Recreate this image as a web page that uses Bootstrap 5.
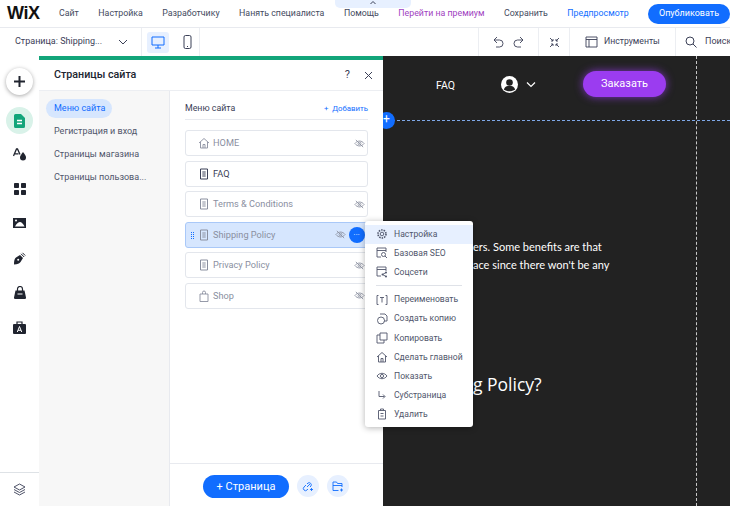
<!DOCTYPE html>
<html lang="ru">
<head>
    <meta charset="UTF-8">
    <meta name="viewport" content="width=device-width, initial-scale=1.0">
    <title>Wix Editor - Pages</title>
    <link href="https://cdn.jsdelivr.net/npm/bootstrap@5.3.0/dist/css/bootstrap.min.css" rel="stylesheet">
    <style>
        html, body {
            height: 100%;
            overflow: hidden;
        }
        body {
            font-family: Roboto, "Liberation Sans", sans-serif;
            font-size: 9px;
            color: #3b4057;
            background-color: #fff;
            position: relative;
        }
        svg {
            display: block;
            flex: none;
        }
        .top-bar {
            height: 28px;
            border-bottom: 1px solid #e8eaef;
            position: relative;
        }
        .logo {
            font-family: "Liberation Sans", sans-serif;
            font-weight: 700;
            font-size: 18px;
            letter-spacing: -.4px;
            color: #111;
            width: 59px;
            padding-left: 7px;
        }
        .top-link {
            font-size: 8.8px;
            white-space: nowrap;
            color: #444a5e;
        }
        .top-links {
            width: 589px;
            gap: 19.5px;
        }
        .top-link.premium { color: #a13fbf; }
        .top-link.preview { color: #116dff; }
        .publish-btn {
            width: 82px;
            height: 20px;
            padding: 0;
            font-size: 9px;
            border-radius: 10px;
            background-color: #116dff;
            border: 0;
            color: #fff;
        }
        .help-tab {
            position: absolute;
            left: 335px;
            top: 0;
            width: 76px;
            height: 8px;
            background-color: #e7f0ff;
            border-radius: 0 0 5px 5px;
        }
        .tool-bar {
            height: 28px;
        }
        .tool-cell {
            height: 28px;
            flex-shrink: 0;
            border-right: 1px solid #eceef2;
        }
        .page-select { width: 142px; padding: 0 13px 0 15px; }
        .device-cell { width: 58px; padding-left: 5px; gap: 7px; }
        .device-btn {
            width: 22px;
            height: 21px;
            border-radius: 3px;
        }
        .device-btn.active { background-color: #e7f0ff; }
        .spacer-cell { width: 279px; }
        .undo-cell { width: 60px; padding-left: 14px; gap: 9px; }
        .fit-cell { width: 31px; justify-content: center; }
        .tools-cell { width: 106px; padding-left: 15px; gap: 6px; font-size: 8.7px; }
        .search-cell { padding-left: 9px; gap: 8px; border: 0; white-space: nowrap; }
        .work-area {
            height: 450px;
        }
        .rail {
            width: 39px;
            padding-top: 12px;
        }
        .add-circle, .pages-circle {
            width: 27px;
            height: 27px;
            border-radius: 50%;
        }
        .add-circle {
            background-color: #fff;
            box-shadow: 0 1px 4px rgba(0, 0, 0, .35);
            margin-bottom: 12px;
        }
        .pages-circle {
            background-color: #d9f2e9;
            margin-bottom: 3px;
        }
        .rail-item {
            height: 34.6px;
        }
        .layers-item {
            margin-top: auto;
            height: 34px;
            width: 100%;
        }
        .panel {
            width: 344px;
            border-top: 4px solid #12a57a;
            background-color: #fff;
        }
        .panel-head {
            height: 31px;
            padding: 1px 10px 0 15px;
            border-bottom: 1px solid #eceef2;
        }
        .panel-title {
            font-size: 10.7px;
            font-weight: 500;
            color: #20242f;
        }
        .panel-help {
            font-size: 11px;
            margin-right: 14px;
            color: #3b4057;
        }
        .side-menu {
            width: 131px;
            background-color: #f7f7f7;
            border-right: 1px solid #e8eaef;
            padding: 8px 0 0 7px;
        }
        .side-item {
            height: 19px;
            line-height: 19px;
            padding: 0 8px;
            margin-bottom: 4px;
            color: #50566b;
            white-space: nowrap;
        }
        .side-item.active {
            width: 66px;
            background-color: #d6e6fe;
            color: #116dff;
            border-radius: 10px;
        }
        .page-pane {
            padding: 9px 15px 0 15px;
        }
        .pane-head {
            height: 20px;
            font-size: 8.8px;
            border-bottom: 1px solid #e8eaef;
            margin-bottom: 10px;
            color: #3b4057;
            padding-bottom: 2px;
        }
        .add-link {
            font-size: 7.8px;
            color: #116dff;
        }
        .page-row {
            height: 26px;
            margin-bottom: 4.6px;
            border: 1px solid #e3e6ec;
            border-radius: 3px;
            padding: 0 2px 0 12px;
            gap: 3px;
            color: #8a8f9f;
            font-size: 9.2px;
            position: relative;
        }
        .page-row.live { color: #3b4057; }
        .page-row.selected {
            background-color: #d6e6fe;
            border-color: #a9c8f8;
        }
        .row-eye { margin-left: auto; }
        .page-row.selected .row-eye { margin-right: 19px; }
        .drag-dots {
            position: absolute;
            left: 5px;
            top: 9px;
            width: 3px;
            height: 7px;
            border-left: 1px dotted #116dff;
            border-right: 1px dotted #116dff;
        }
        .more-btn {
            position: absolute;
            left: 163px;
            top: 4px;
            width: 16px;
            height: 16px;
            border-radius: 50%;
            background-color: #116dff;
            color: #fff;
            font-size: 4px;
            line-height: 16px;
            text-align: center;
            letter-spacing: .8px;
        }
        .panel-foot {
            height: 43px;
            border-top: 1px solid #e8eaef;
            padding: 11px 0 0 33px;
            gap: 8px;
        }
        .add-page-btn {
            width: 86px;
            height: 23px;
            padding: 0;
            border: 0;
            border-radius: 12px;
            font-size: 11px;
            line-height: 23px;
            background-color: #116dff;
            color: #fff;
        }
        .foot-circle {
            width: 22px;
            height: 22px;
            border-radius: 50%;
            background-color: #e7f0ff;
        }
        .site-canvas {
            background-color: #222;
            position: relative;
            overflow: hidden;
            color: #fff;
        }
        .site-canvas > * { position: absolute; }
        .faq-link { left: 53px; top: 22px; font-size: 10.5px; }
        .avatar-icon { left: 118px; top: 20px; }
        .avatar-caret { left: 143px; top: 25px; }
        .order-btn {
            left: 200px;
            top: 15px;
            width: 83px;
            height: 26px;
            border-radius: 13px;
            background-color: #9b3cf0;
            box-shadow: 0 0 9px rgba(155, 60, 240, .75);
            font-size: 11px;
            line-height: 25px;
            text-align: center;
        }
        .guide-h {
            left: 4px;
            right: 0;
            top: 64px;
            border-top: 1px dashed #7fa8e8;
        }
        .guide-v {
            left: 313px;
            top: 0;
            bottom: 0;
            border-left: 1px dashed #c8c8c8;
        }
        .guide-plus {
            left: -5px;
            top: 56px;
            width: 17px;
            height: 17px;
            line-height: 15px;
            border-radius: 50%;
            background-color: #116dff;
            text-align: center;
            font-size: 12px;
        }
        .site-text {
            left: 90px;
            top: 182px;
            font-family: Lato, "Liberation Sans", sans-serif;
            font-size: 11px;
            line-height: 18px;
            white-space: nowrap;
        }
        .site-heading {
            left: 90px;
            top: 315px;
            font-family: "Open Sans", sans-serif;
            font-size: 17.5px;
            line-height: 26px;
            white-space: nowrap;
        }
        .ctx-menu {
            position: absolute;
            left: 365px;
            top: 221px;
            width: 108px;
            height: 206px;
            padding-top: 3.5px;
            background-color: #fff;
            border-radius: 3px;
            box-shadow: 0 1px 6px rgba(0, 0, 0, .3);
            font-size: 8.6px;
        }
        .ctx-item {
            height: 19.1px;
            padding-left: 11px;
            gap: 6px;
            color: #50566b;
            white-space: nowrap;
        }
        .ctx-item.active { background-color: #e7f0ff; }
        .ctx-sep {
            height: 1px;
            margin: 3.5px 11px 4px 11px;
            background-color: #dfe2e8;
        }
    </style>
</head>
<body>

<svg width="0" height="0" class="position-absolute">
    <defs>
        <symbol id="i-page" viewBox="0 0 12 12"><path d="M2.500 1h7v10h-7zM4.300 4h3.400M4.300 6h3.400M4.300 8h3.400" fill="none" stroke="currentColor" stroke-width="1"/></symbol>
        <symbol id="i-eye-off" viewBox="0 0 12 12"><path d="M1 6c2.600-3.600 7.400-3.600 10 0-2.600 3.600-7.400 3.600-10 0z" fill="none" stroke="#8a8f9f" stroke-width=".9"/><circle cx="6" cy="6" r="1.600" fill="none" stroke="#8a8f9f" stroke-width=".9"/><path d="M2 2l8 8" stroke="#8a8f9f" stroke-width=".9"/></symbol>
        <symbol id="i-home" viewBox="0 0 12 12"><path d="M1 6l5-4.500L11 6M2.500 5v6h7V5M5 11V7.500h2V11" fill="none" stroke="currentColor" stroke-width=".9"/></symbol>
    </defs>
</svg>

<!-- Top menu -->
<header class="top-bar d-flex align-items-center">
    <div class="logo">WiX</div>
    <nav class="top-links d-flex align-items-center">
        <span class="top-link">Сайт</span>
        <span class="top-link">Настройка</span>
        <span class="top-link">Разработчику</span>
        <span class="top-link">Нанять специалиста</span>
        <span class="top-link">Помощь</span>
        <span class="top-link premium">Перейти на премиум</span>
        <span class="top-link">Сохранить</span>
        <span class="top-link preview">Предпросмотр</span>
    </nav>
    <button class="btn publish-btn" type="button">Опубликовать</button>
    <div class="help-tab d-flex justify-content-center">
        <svg width="8" height="5" viewBox="0 0 8 5"><path d="M1.500 4L4 1.500 6.500 4" fill="none" stroke="#3b4057"/></svg>
    </div>
</header>

<!-- Tools -->
<div class="tool-bar d-flex">
    <div class="tool-cell page-select d-flex align-items-center justify-content-between">
        <span>Страница: Shipping...</span>
        <svg width="10" height="6" viewBox="0 0 10 6"><path d="M1 1l4 4 4-4" fill="none" stroke="#3b4057"/></svg>
    </div>
    <div class="tool-cell device-cell d-flex align-items-center">
        <div class="device-btn active d-flex align-items-center justify-content-center">
            <svg width="14" height="13" viewBox="0 0 14 13"><path d="M1 1h12v8H1zM7 9v3M4 12h6" fill="none" stroke="#116dff"/></svg>
        </div>
        <div class="device-btn d-flex align-items-center justify-content-center">
            <svg width="9" height="14" viewBox="0 0 9 14"><rect x="1" y=".5" width="7" height="13" rx="1.500" fill="none" stroke="#3b4057"/><path d="M4 11.500h1" stroke="#3b4057"/></svg>
        </div>
    </div>
    <div class="tool-cell spacer-cell"></div>
    <div class="tool-cell undo-cell d-flex align-items-center">
        <svg width="11" height="12" viewBox="0 0 11 12"><path d="M4 1L1 4l3 3M1 4h5.500a3.500 3.500 0 010 7H3" fill="none" stroke="#3b4057" stroke-width=".9"/></svg>
        <svg width="11" height="12" viewBox="0 0 11 12"><path d="M7 1l3 3-3 3M10 4H4.500a3.500 3.500 0 000 7H8" fill="none" stroke="#3b4057" stroke-width=".9"/></svg>
    </div>
    <div class="tool-cell fit-cell d-flex align-items-center">
        <svg width="11" height="11" viewBox="0 0 11 11"><path d="M1 1l3 3M4 2v2H2M10 1L7 4M7 2v2h2M1 10l3-3M4 9V7H2M10 10L7 7M7 9V7h2" fill="none" stroke="#3b4057" stroke-width=".9"/></svg>
    </div>
    <div class="tool-cell tools-cell d-flex align-items-center">
        <svg width="13" height="12" viewBox="0 0 13 12"><path d="M1 1h11v10H1zM1 3.500h11M4 3.500V11" fill="none" stroke="#3b4057" stroke-width=".9"/></svg>
        <span>Инструменты</span>
    </div>
    <div class="tool-cell search-cell d-flex align-items-center">
        <svg width="12" height="12" viewBox="0 0 12 12"><circle cx="5" cy="5" r="4" fill="none" stroke="#3b4057"/><path d="M8 8l3.500 3.500" stroke="#3b4057"/></svg>
        <span>Поиск</span>
    </div>
</div>

<div class="work-area d-flex">
    <!-- Left rail -->
    <aside class="rail d-flex flex-column align-items-center">
        <div class="add-circle d-flex align-items-center justify-content-center">
            <svg width="13" height="13" viewBox="0 0 13 13"><path d="M6.500 1v11M1 6.500h11" stroke="#20242f" stroke-width="2"/></svg>
        </div>
        <div class="pages-circle d-flex align-items-center justify-content-center">
            <svg width="11" height="14" viewBox="0 0 11 14"><path d="M1.500 0H7l4 4v8.500a1.500 1.500 0 01-1.500 1.500h-8A1.500 1.500 0 010 12.500v-11A1.500 1.500 0 011.500 0z" fill="#12a57a"/><path d="M3 6.500h5M3 9.500h5" stroke="#fff" stroke-width="1.500"/></svg>
        </div>
        <div class="rail-item d-flex align-items-center">
            <svg width="14" height="13" viewBox="0 0 14 13"><path d="M.5 8L3.500 1h1L7 6.500M2 5.800h3.500" fill="none" stroke="#20242f" stroke-width="1.300"/><path d="M10 4c2 2.600 3 4 3 5.500a3 3 0 01-6 0C7 8 8 6.600 10 4z" fill="#20242f"/></svg>
        </div>
        <div class="rail-item d-flex align-items-center">
            <svg width="12" height="12" viewBox="0 0 12 12" fill="#20242f"><rect width="5" height="5" rx=".8"/><rect x="7" width="5" height="5" rx=".8"/><rect y="7" width="5" height="5" rx=".8"/><rect x="7" y="7" width="5" height="5" rx=".8"/></svg>
        </div>
        <div class="rail-item d-flex align-items-center">
            <svg width="13" height="10" viewBox="0 0 13 10"><rect width="13" height="10" fill="#20242f"/><path d="M2 8.500C4 5 5.500 4 7 4s3 1.500 4.500 4.500z" fill="#fff"/><circle cx="3" cy="2.500" r="1" fill="#fff"/></svg>
        </div>
        <div class="rail-item d-flex align-items-center">
            <svg width="13" height="13" viewBox="0 0 13 13"><path d="M1 12.500c0-4 .5-6 2-7L7 3l3 3-2.500 4c-1 1.500-3 2.200-6.500 2.500z" fill="#20242f"/><path d="M8 1.800l3.200 3.200M9.500.8l2.700 2.700" stroke="#20242f"/><circle cx="5.200" cy="7.800" r="1" fill="#fff"/></svg>
        </div>
        <div class="rail-item d-flex align-items-center">
            <svg width="12" height="13" viewBox="0 0 12 13"><path d="M1.500 4.500h9L12 11.500a1.300 1.300 0 01-1.300 1.500H1.300A1.300 1.300 0 010 11.500z" fill="#20242f"/><path d="M3.500 5V3a2.500 2.500 0 015 0v2" fill="none" stroke="#20242f" stroke-width="1.200"/><path d="M3.500 8h5" stroke="#fff"/></svg>
        </div>
        <div class="rail-item d-flex align-items-center">
            <svg width="13" height="13" viewBox="0 0 13 13"><rect y="3" width="13" height="10" rx="1" fill="#20242f"/><path d="M4 3V1h5v2" fill="none" stroke="#20242f" stroke-width="1.200"/><path d="M4.300 11l2.200-5.500L8.700 11M5.100 9.300h2.800" fill="none" stroke="#fff"/></svg>
        </div>
        <div class="layers-item border-top d-flex align-items-center justify-content-center">
            <svg width="13" height="13" viewBox="0 0 13 13"><path d="M6.500 1L12 4 6.500 7 1 4zM1 6.500l5.500 3 5.500-3M1 9l5.500 3L12 9" fill="none" stroke="#3b4057" stroke-width=".9"/></svg>
        </div>
    </aside>

    <!-- Pages panel -->
    <section class="panel d-flex flex-column">
        <div class="panel-head d-flex align-items-center">
            <span class="panel-title me-auto">Страницы сайта</span>
            <span class="panel-help">?</span>
            <svg width="9" height="9" viewBox="0 0 9 9"><path d="M1 1l7 7M8 1L1 8" stroke="#3b4057"/></svg>
        </div>
        <div class="d-flex flex-grow-1">
            <div class="side-menu">
                <div class="side-item active">Меню сайта</div>
                <div class="side-item">Регистрация и вход</div>
                <div class="side-item">Страницы магазина</div>
                <div class="side-item">Страницы пользова...</div>
            </div>
            <div class="d-flex flex-column flex-grow-1">
                <div class="page-pane flex-grow-1">
                    <div class="pane-head d-flex align-items-center justify-content-between">
                        <span>Меню сайта</span>
                        <span class="add-link">+&nbsp; Добавить</span>
                    </div>
                    <div class="page-row d-flex align-items-center">
                        <svg width="12" height="12"><use href="#i-home"/></svg>
                        <span>HOME</span>
                        <svg class="row-eye" width="11" height="11"><use href="#i-eye-off"/></svg>
                    </div>
                    <div class="page-row live d-flex align-items-center">
                        <svg width="12" height="12"><use href="#i-page"/></svg>
                        <span>FAQ</span>
                    </div>
                    <div class="page-row d-flex align-items-center">
                        <svg width="12" height="12"><use href="#i-page"/></svg>
                        <span>Terms &amp; Conditions</span>
                        <svg class="row-eye" width="11" height="11"><use href="#i-eye-off"/></svg>
                    </div>
                    <div class="page-row selected d-flex align-items-center">
                        <span class="drag-dots"></span>
                        <svg width="12" height="12"><use href="#i-page"/></svg>
                        <span>Shipping Policy</span>
                        <svg class="row-eye" width="11" height="11"><use href="#i-eye-off"/></svg>
                        <span class="more-btn">•••</span>
                    </div>
                    <div class="page-row d-flex align-items-center">
                        <svg width="12" height="12"><use href="#i-page"/></svg>
                        <span>Privacy Policy</span>
                        <svg class="row-eye" width="11" height="11"><use href="#i-eye-off"/></svg>
                    </div>
                    <div class="page-row d-flex align-items-center">
                        <svg width="12" height="12" viewBox="0 0 12 12"><path d="M2 4h8v7.500H2zM4.500 4V2.500a1.500 1.500 0 013 0V4" fill="none" stroke="currentColor" stroke-width=".9"/></svg>
                        <span>Shop</span>
                        <svg class="row-eye" width="11" height="11"><use href="#i-eye-off"/></svg>
                    </div>
                </div>
                <div class="panel-foot d-flex">
                    <button class="btn add-page-btn" type="button">+ Страница</button>
                    <div class="foot-circle d-flex align-items-center justify-content-center">
                        <svg width="12" height="12" viewBox="0 0 12 12"><path d="M5 7l3-3M4 5L2 7a2 2 0 003 3l1-1M8 7l1-1a2.200 2.200 0 00-3-3L5 4M9.500 8v3M8 9.500h3" fill="none" stroke="#116dff" stroke-width=".9"/></svg>
                    </div>
                    <div class="foot-circle d-flex align-items-center justify-content-center">
                        <svg width="12" height="11" viewBox="0 0 12 11"><path d="M6.500 9.500H1V1h3.500l1 1.500H10V6M1 4.500h9M9.500 7.500v3M8 9h3" fill="none" stroke="#116dff" stroke-width=".9"/></svg>
                    </div>
                </div>
            </div>
        </div>
    </section>

    <!-- Site preview -->
    <main class="site-canvas flex-grow-1">
        <span class="faq-link">FAQ</span>
        <svg class="avatar-icon" width="17" height="17" viewBox="0 0 17 17"><circle cx="8.500" cy="8.500" r="8.500" fill="#fff"/><circle cx="8.500" cy="6.500" r="3.300" fill="#222"/><path d="M2.800 13.500c1-3 3-3.800 5.700-3.800s4.700.8 5.700 3.800c-3 2.400-8.400 2.400-11.400 0z" fill="#222"/></svg>
        <svg class="avatar-caret" width="10" height="7" viewBox="0 0 10 7"><path d="M1 1.500l4 4 4-4" fill="none" stroke="#fff" stroke-width="1.200"/></svg>
        <span class="order-btn">Заказать</span>
        <div class="guide-h"></div>
        <div class="guide-v"></div>
        <span class="guide-plus">+</span>
        <p class="site-text m-0">ers. Some benefits are that<br>ace since there won't be any</p>
        <p class="site-heading m-0">g Policy?</p>
    </main>
</div>

<!-- Page context menu -->
<div class="ctx-menu">
    <div class="ctx-item active d-flex align-items-center">
        <svg width="12" height="12" viewBox="0 0 12 12"><circle cx="6" cy="6" r="1.800" fill="none" stroke="#50566b" stroke-width=".9"/><circle cx="6" cy="6" r="4" fill="none" stroke="#50566b" stroke-width="1.600" stroke-dasharray="1.500 1"/></svg>
        <span>Настройка</span>
    </div>
    <div class="ctx-item d-flex align-items-center">
        <svg width="12" height="12" viewBox="0 0 12 12"><path d="M5 10H1V1h9v4M1 3.500h9" fill="none" stroke="#50566b" stroke-width=".9"/><circle cx="7.500" cy="7.500" r="2" fill="none" stroke="#50566b" stroke-width=".9"/><path d="M9 9l2 2" stroke="#50566b" stroke-width=".9"/></svg>
        <span>Базовая SEO</span>
    </div>
    <div class="ctx-item d-flex align-items-center">
        <svg width="12" height="12" viewBox="0 0 12 12"><path d="M5 10H1V1h9v4M1 3.500h9" fill="none" stroke="#50566b" stroke-width=".9"/><path d="M6.500 8.500L10 6.500M6.500 8.500l3.500 2" stroke="#50566b" stroke-width=".9"/><circle cx="6.500" cy="8.500" r="1" fill="#50566b"/><circle cx="10" cy="6.500" r="1" fill="#50566b"/><circle cx="10" cy="10.500" r="1" fill="#50566b"/></svg>
        <span>Соцсети</span>
    </div>
    <div class="ctx-sep"></div>
    <div class="ctx-item d-flex align-items-center">
        <svg width="12" height="12" viewBox="0 0 12 12"><path d="M2.500 1.500H1v9h1.500M9.500 1.500H11v9H9.500M4 3.500h4M6 3.500v5" fill="none" stroke="#50566b" stroke-width=".9"/></svg>
        <span>Переименовать</span>
    </div>
    <div class="ctx-item d-flex align-items-center">
        <svg width="12" height="12" viewBox="0 0 12 12"><path d="M4 1h5l2 2v5H8" fill="none" stroke="#50566b" stroke-width=".9"/><circle cx="5" cy="7.500" r="3.500" fill="none" stroke="#50566b" stroke-width=".9"/></svg>
        <span>Создать копию</span>
    </div>
    <div class="ctx-item d-flex align-items-center">
        <svg width="12" height="12" viewBox="0 0 12 12"><path d="M4 1h7v7H4zM4 3H1v8h7V8" fill="none" stroke="#50566b" stroke-width=".9"/></svg>
        <span>Копировать</span>
    </div>
    <div class="ctx-item d-flex align-items-center">
        <svg width="12" height="12"><use href="#i-home"/></svg>
        <span>Сделать главной</span>
    </div>
    <div class="ctx-item d-flex align-items-center">
        <svg width="12" height="12" viewBox="0 0 12 12"><path d="M1 6c2.600-3.600 7.400-3.600 10 0-2.600 3.600-7.400 3.600-10 0z" fill="none" stroke="#50566b" stroke-width=".9"/><circle cx="6" cy="6" r="1.600" fill="none" stroke="#50566b" stroke-width=".9"/></svg>
        <span>Показать</span>
    </div>
    <div class="ctx-item d-flex align-items-center">
        <svg width="12" height="12" viewBox="0 0 12 12"><path d="M3 2v5.500h5.500M7 5.500l2 2-2 2" fill="none" stroke="#50566b" stroke-width=".9"/></svg>
        <span>Субстраница</span>
    </div>
    <div class="ctx-item d-flex align-items-center">
        <svg width="12" height="12" viewBox="0 0 12 12"><path d="M2.500 2.500h7v8.500h-7zM4.500 2.500V1h3v1.500M4.500 5.500h3M4.500 8h3" fill="none" stroke="#50566b" stroke-width=".9"/></svg>
        <span>Удалить</span>
    </div>
</div>

<script src="https://cdn.jsdelivr.net/npm/bootstrap@5.3.0/dist/js/bootstrap.bundle.min.js"></script>
</body>
</html>
